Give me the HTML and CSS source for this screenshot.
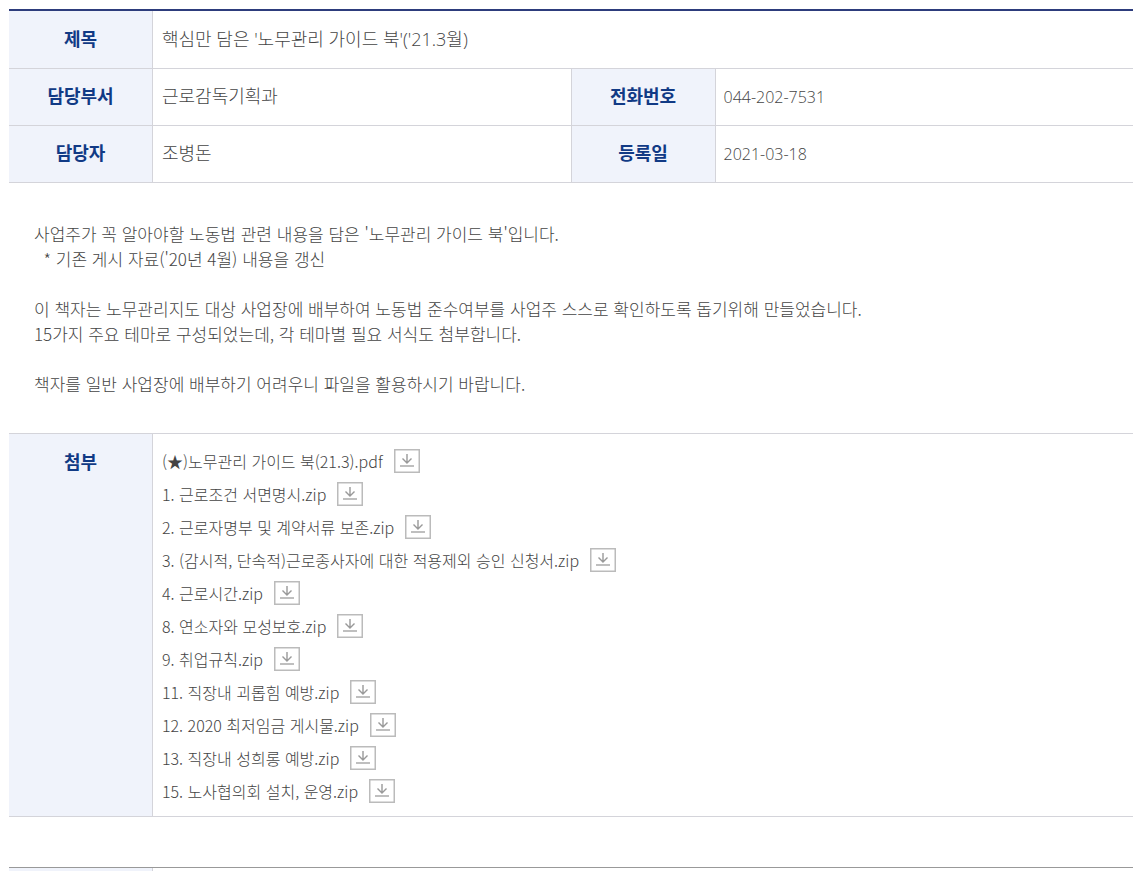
FILE: index.html
```html
<!DOCTYPE html>
<html lang="ko">
<head>
<meta charset="utf-8">
<title>핵심만 담은 '노무관리 가이드 북'('21.3월)</title>
<meta name="viewport" content="width=device-width, initial-scale=1">
<link rel="stylesheet" href="styles.css">
</head>
<body>
<svg width="0" height="0" class="sprite" aria-hidden="true">
  <symbol id="download" viewBox="0 0 26 24">
    <path d="M.75 .75H25.250V23.250H.75Z" fill="#fff" stroke="#bbb" stroke-width="1.500"/>
    <path d="M6 17H20" fill="none" stroke="#aaa" stroke-width="1.500"/>
    <path d="M13 5V14M8.500 9.500L13 14L17.500 9.500" fill="none" stroke="#999" stroke-width="1.400"/>
  </symbol>
</svg>
<main>
  <table class="info">
    <colgroup><col class="label-col"><col><col class="label-col second"><col></colgroup>
    <tbody>
      <tr><th scope="row">제목</th><td colspan="3">핵심만 담은 '노무관리 가이드 북'('21.3월)</td></tr>
      <tr><th scope="row">담당부서</th><td>근로감독기획과</td><th scope="row">전화번호</th><td class="number">044-202-7531</td></tr>
      <tr><th scope="row">담당자</th><td>조병돈</td><th scope="row">등록일</th><td class="number">2021-03-18</td></tr>
    </tbody>
  </table>
  <div class="content">
    <p>사업주가 꼭 알아야할 노동법 관련 내용을 담은 '노무관리 가이드 북'입니다.<br>&nbsp; * 기존 게시 자료('20년 4월) 내용을 갱신</p>
    <p>이 책자는 노무관리지도 대상 사업장에 배부하여 노동법 준수여부를 사업주 스스로 확인하도록 돕기위해 만들었습니다.<br>15가지 주요 테마로 구성되었는데, 각 테마별 필요 서식도 첨부합니다.</p>
    <p>책자를 일반 사업장에 배부하기 어려우니 파일을 활용하시기 바랍니다.</p>
  </div>
  <table class="info files">
    <colgroup><col class="label-col"><col></colgroup>
    <tbody>
      <tr>
        <th scope="row">첨부</th>
        <td>
          <ul>
            <li><span>(★)노무관리 가이드 북(21.3).pdf</span><a href="#" aria-label="다운로드"><svg><use href="#download"/></svg></a></li>
            <li><span>1. 근로조건 서면명시.zip</span><a href="#" aria-label="다운로드"><svg><use href="#download"/></svg></a></li>
            <li><span>2. 근로자명부 및 계약서류 보존.zip</span><a href="#" aria-label="다운로드"><svg><use href="#download"/></svg></a></li>
            <li><span>3. (감시적, 단속적)근로종사자에 대한 적용제외 승인 신청서.zip</span><a href="#" aria-label="다운로드"><svg><use href="#download"/></svg></a></li>
            <li><span>4. 근로시간.zip</span><a href="#" aria-label="다운로드"><svg><use href="#download"/></svg></a></li>
            <li><span>8. 연소자와 모성보호.zip</span><a href="#" aria-label="다운로드"><svg><use href="#download"/></svg></a></li>
            <li><span>9. 취업규칙.zip</span><a href="#" aria-label="다운로드"><svg><use href="#download"/></svg></a></li>
            <li><span>11. 직장내 괴롭힘 예방.zip</span><a href="#" aria-label="다운로드"><svg><use href="#download"/></svg></a></li>
            <li><span>12. 2020 최저임금 게시물.zip</span><a href="#" aria-label="다운로드"><svg><use href="#download"/></svg></a></li>
            <li><span>13. 직장내 성희롱 예방.zip</span><a href="#" aria-label="다운로드"><svg><use href="#download"/></svg></a></li>
            <li><span>15. 노사협의회 설치, 운영.zip</span><a href="#" aria-label="다운로드"><svg><use href="#download"/></svg></a></li>
          </ul>
        </td>
      </tr>
    </tbody>
  </table>
  <table class="info next">
    <colgroup><col class="label-col"><col></colgroup>
    <tbody><tr><th></th><td></td></tr></tbody>
  </table>
</main>
</body>
</html>
```

FILE: styles.css
```css
* {
  box-sizing: border-box;
}

body {
  margin: 0;
  background: #fff;
  color: #444;
  font-family: "Open Sans", "Noto Sans CJK KR", sans-serif;
  font-size: 16px;
  font-weight: 300;
}

main {
  padding: 9px 12px 0 9px;
}

.sprite {
  position: absolute;
}

.info {
  width: 100%;
  border-collapse: separate;
  border-spacing: 0;
  table-layout: fixed;
  border-top: 2px solid #2d3c7c;
}

.label-col {
  width: 144px;
}

.label-col.second {
  width: 145px;
}

.info th,
.info td {
  height: 57px;
  padding: 0 9px 2px;
  border-bottom: 1px solid #d4d4da;
  font-size: 18px;
  line-height: 26px;
  text-align: left;
}

.info th {
  padding: 0 0 2px;
  border-right: 1px solid #d4d4da;
  background: #f0f3fb;
  color: #113a85;
  font-weight: 700;
  text-align: center;
}

.info tr:first-child > * {
  height: 58px;
}

.info td + th {
  border-left: 1px solid #d4d4da;
}

.info .number {
  padding: 0 8px;
  font-size: 16px;
}

.content {
  padding: 38px 25px 37px;
  font-family: "Noto Sans CJK KR", sans-serif;
  font-size: 17px;
  line-height: 25px;
}

.content p {
  margin: 0 0 25px;
}

.content p:last-child {
  margin-bottom: 0;
}

.info.files {
  border-top: 1px solid #d4d4da;
}

.info.files th {
  padding-top: 15px;
  vertical-align: top;
}

.info.files td {
  padding: 10px 9px 9px;
}

ul {
  margin: 0;
  padding: 0;
  list-style: none;
  font-family: "Noto Sans CJK KR", sans-serif;
  font-size: 16px;
}

li {
  display: flex;
  align-items: center;
  gap: 11px;
  height: 33px;
}

li a,
li svg {
  display: block;
  width: 26px;
  height: 24px;
}

.info.next {
  margin-top: 50px;
  border-top: 1px solid #999;
}

.info.next tr > * {
  height: 3px;
  border-bottom: 0;
}
```
